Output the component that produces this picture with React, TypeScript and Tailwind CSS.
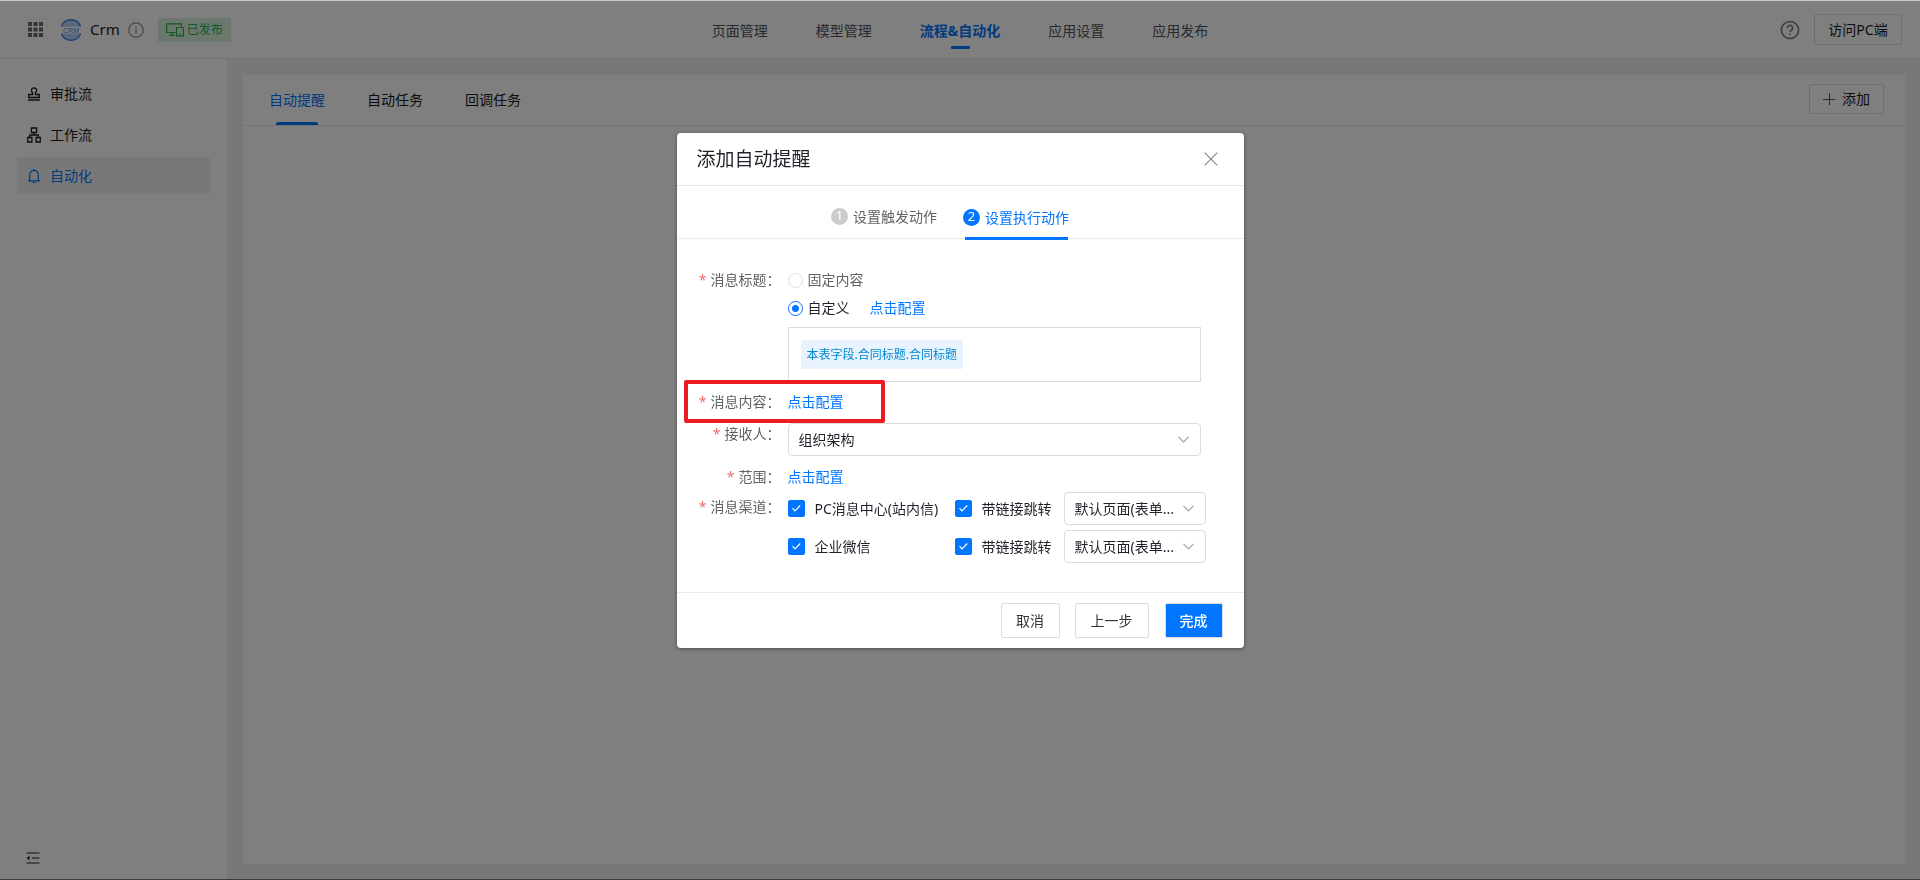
import React, { useState } from 'react';

const NAV_ITEMS = ['页面管理', '模型管理', '流程&自动化', '应用设置', '应用发布'];
const TABS = ['自动提醒', '自动任务', '回调任务'];

const StampIcon = () => (
    <svg width="14" height="14" viewBox="0 0 14 14" fill="none" stroke="currentColor" strokeWidth="1.3">
        <path d="M5.6 7.5V5.6a2.6 2.6 0 1 1 2.8 0v1.9h3.9v3H1.7v-3h3.9zM1.2 13h11.6" />
    </svg>
);

const FlowIcon = () => (
    <svg width="14" height="16" viewBox="0 0 14 16" fill="none" stroke="currentColor" strokeWidth="1.3">
        <path d="M4.4 1h5.2v4.5H4.4zM.7 10.5h4.2V15H.7zM9.1 10.5h4.2V15H9.1zM7 5.5V8M2.7 10.5V8h8.6v2.5" />
    </svg>
);

const BellIcon = () => (
    <svg width="14" height="16" viewBox="0 0 14 16" fill="none" stroke="currentColor" strokeWidth="1.2">
        <path d="M1 12.8h12M2.7 12.8V6.6a4.3 4.3 0 0 1 8.6 0v6.2M7 .8v1.5M5.5 14.5h3" />
    </svg>
);

const GridIcon = () => (
    <svg width="15" height="15" viewBox="0 0 15 15" fill="currentColor">
        {[0, 5.5, 11].map((y) =>
            [0, 5.5, 11].map((x) => <rect key={`${x}-${y}`} x={x} y={y} width="4" height="4" />)
        )}
    </svg>
);

const Logo = () => (
    <svg width="22" height="22" viewBox="0 0 22 22">
        <path d="M1.4 7.5a10.2 10.2 0 0 1 19.2 0z" fill="#b5cdf5" />
        <path d="M1.4 14.5a10.2 10.2 0 0 0 19.2 0z" fill="#b5cdf5" />
        <path d="M1.4 7.5a10.2 10.2 0 0 1 19.2 0M1.4 14.5a10.2 10.2 0 0 0 19.2 0" fill="none" stroke="#4080e4" strokeWidth="1.4" />
        <text x="11" y="13.6" textAnchor="middle" fontSize="7" fontFamily="Liberation Sans, sans-serif" fill="#4080e4">CRM</text>
    </svg>
);

const DevicesIcon = () => (
    <svg width="18" height="14" viewBox="0 0 18 14" fill="none" stroke="currentColor" strokeWidth="1.2">
        <path d="M9.5 9.5H.6V.8h14.8v3M3 12.4h6M6 9.5v3M10.5 4.5h6.8v8.4h-6.8zM13 11h2" />
    </svg>
);

const InfoIcon = () => (
    <svg width="16" height="16" viewBox="0 0 16 16" fill="none" stroke="currentColor" strokeWidth="1.2">
        <circle cx="8" cy="8" r="7.2" />
        <path d="M8 7v4.8M8 4.2v1.4" />
    </svg>
);

const HelpIcon = () => (
    <svg width="20" height="20" viewBox="0 0 20 20" fill="none" stroke="currentColor" strokeWidth="1.5">
        <circle cx="10" cy="10" r="8.6" />
        <path d="M7.4 8a2.6 2.6 0 1 1 3.7 2.3c-.8.4-1.1.8-1.1 1.7M10 13.6v1.6" />
    </svg>
);

const CollapseIcon = () => (
    <svg width="14" height="12" viewBox="0 0 14 12" fill="none" stroke="currentColor" strokeWidth="1.2">
        <path d="M.5 1h13M6 6h7.5M.5 11h13" />
        <path d="M.5 6 3.5 3.8v4.4z" fill="currentColor" stroke="none" />
    </svg>
);

const MENU = [
    { label: '审批流', icon: <StampIcon /> },
    { label: '工作流', icon: <FlowIcon /> },
    { label: '自动化', icon: <BellIcon /> },
];

interface FormRowProps {
    label: string;
    className?: string;
    labelClassName?: string;
    children: React.ReactNode;
}

const FormRow = ({ label, className = '', labelClassName = '', children }: FormRowProps) => (
    <div className={`flex ${className}`}>
        <div className={`w-[104px] shrink-0 text-right leading-[22px] text-[#606266] ${labelClassName}`}>
            <span className="mr-1 text-[#f56c6c]">*</span>
            {label}：
        </div>
        <div className="ml-[7px] min-w-0 flex-1">{children}</div>
    </div>
);

const ConfigLink = () => (
    <a href="#config" className="leading-[22px] text-[#0075ff]">点击配置</a>
);

const Radio = ({ label, checked, onChange }: { label: string; checked: boolean; onChange: () => void }) => (
    <label className={`flex items-center gap-[5px] leading-[22px] ${checked ? 'text-[#1f2329]' : 'text-[#606266]'}`}>
        <input
            type="radio"
            name="title-type"
            checked={checked}
            onChange={onChange}
            className="size-[15px] appearance-none rounded-full border border-[#dcdfe6] bg-white checked:border-[#0075ff] checked:bg-[radial-gradient(circle,#0075ff_3px,#fff_4px)]"
        />
        {label}
    </label>
);

const Checkbox = ({ label }: { label: string }) => (
    <label className="flex items-center gap-[10px] whitespace-nowrap leading-[22px] text-[#1f2329]">
        <span className="grid">
            <input
                type="checkbox"
                defaultChecked
                className="peer col-start-1 row-start-1 size-[17px] appearance-none rounded-[2px] border border-[#dcdfe6] checked:border-[#0075ff] checked:bg-[#0075ff]"
            />
            <svg className="pointer-events-none col-start-1 row-start-1 hidden peer-checked:block" width="17" height="17" viewBox="0 0 17 17" fill="none" stroke="#fff" strokeWidth="1.2">
                <path d="M4.5 8.2 7 10.8l5.2-5.3" />
            </svg>
        </span>
        {label}
    </label>
);

const Select = ({ label, options, className = '' }: { label: string; options: string[]; className?: string }) => (
    <div className={`grid items-center ${className}`}>
        <select
            aria-label={label}
            className="col-start-1 row-start-1 h-[33px] w-full appearance-none rounded-[4px] border border-[#dcdcdc] bg-white pr-5 pl-[10px] text-[#1f2329]"
        >
            {options.map((o) => (
                <option key={o}>{o}</option>
            ))}
        </select>
        <svg className="pointer-events-none col-start-1 row-start-1 mr-3 justify-self-end" width="11" height="7" viewBox="0 0 11 7" fill="none" stroke="#a0a4ac" strokeWidth="1.2">
            <path d="m.5.8 5 5 5-5" />
        </svg>
    </div>
);

const ReminderDialog = () => {
    const [titleType, setTitleType] = useState('custom');

    return (
        <div role="dialog" aria-label="添加自动提醒" className="w-[567px] rounded-[4px] bg-white shadow-[0_1px_4px_rgba(0,0,0,0.4)]">
            <div className="flex h-[53px] items-center justify-between border-b border-[#e4e4e4] pr-[26px] pl-5">
                <h2 className="text-[19px] text-[#1f2329]">添加自动提醒</h2>
                <button aria-label="关闭" className="text-[#85888f]">
                    <svg width="14" height="14" viewBox="0 0 14 14" stroke="currentColor" strokeWidth="1.2">
                        <path d="m.7.7 12.6 12.6M13.3.7.7 13.3" />
                    </svg>
                </button>
            </div>

            {/* Steps */}
            <div className="flex h-[53px] justify-center gap-[26px] border-b border-[#ebebeb] pr-5">
                <button className="flex items-center gap-[5px] pt-4 pb-2 text-[#606266]">
                    <span className="flex size-[17px] items-center justify-center rounded-full bg-[#ccc] text-[13px] text-white">1</span>
                    设置触发动作
                </button>
                <button className="-mb-[2px] flex flex-col items-center text-[#0075ff]">
                    <span className="flex flex-1 items-center gap-[5px] pt-[17px] pb-[6px]">
                        <span className="flex size-[17px] items-center justify-center rounded-full bg-[#0075ff] text-[13px] text-white">2</span>
                        设置执行动作
                    </span>
                    <span className="h-[3px] w-[103px] bg-[#0075ff]" />
                </button>
            </div>

            <form className="pt-[30px]" onSubmit={(e) => e.preventDefault()}>
                <FormRow label="消息标题" className="pr-[43px]">
                    <Radio label="固定内容" checked={titleType === 'fixed'} onChange={() => setTitleType('fixed')} />
                    <div className="mt-[6px] flex gap-5">
                        <Radio label="自定义" checked={titleType === 'custom'} onChange={() => setTitleType('custom')} />
                        <ConfigLink />
                    </div>
                    <div className="mt-2 flex h-[55px] items-center border border-[#dcdcdc] px-3">
                        <span className="rounded-[2px] bg-[#e8f3ff] px-[6px] text-[12px] leading-[29px] text-[#0089cf]">
                            本表字段.合同标题.合同标题
                        </span>
                    </div>
                </FormRow>

                {/* Highlighted row */}
                <div className="relative">
                    <FormRow label="消息内容" className="mt-[9px]">
                        <ConfigLink />
                    </FormRow>
                    <div className="pointer-events-none absolute -top-[11px] left-[7px] h-[43px] w-[201px] rounded-[2px] border-4 border-[#ed1c24]" />
                </div>

                <FormRow label="接收人" className="mt-[10px] pr-[43px]">
                    <Select label="接收人" options={['组织架构']} />
                </FormRow>
                <FormRow label="范围" className="mt-[10px]">
                    <ConfigLink />
                </FormRow>
                <FormRow label="消息渠道" className="mt-1 pr-[38px]" labelClassName="pt-1">
                    <div className="flex flex-col gap-[5px]">
                        {['PC消息中心(站内信)', '企业微信'].map((channel) => (
                            <div key={channel} className="flex items-center">
                                <div className="w-[167px]">
                                    <Checkbox label={channel} />
                                </div>
                                <Checkbox label="带链接跳转" />
                                <Select label="跳转页面" options={['默认页面(表单...']} className="ml-auto w-[142px]" />
                            </div>
                        ))}
                    </div>
                </FormRow>
            </form>

            <div className="mt-[29px] flex justify-end border-t border-[#ebebeb] pt-[10px] pr-[21px] pb-[10px] text-[#333]">
                <button className="h-[35px] w-[59px] rounded-[2px] border border-[#dcdcdc]">取消</button>
                <button className="ml-[15px] h-[35px] w-[74px] rounded-[2px] border border-[#dcdcdc]">上一步</button>
                <button className="ml-4 h-[35px] w-[58px] rounded-[2px] border border-[#dcdcdc] bg-[#0075ff] font-medium text-white">完成</button>
            </div>
        </div>
    );
};

export default function App() {
    return (
        <div className="flex h-screen flex-col border-t border-[#c8c8c8] bg-[#f0f0f0] font-['Noto_Sans','Noto_Sans_CJK_SC',sans-serif] text-[14px] text-[#1a1a1a]">
            <header className="grid h-[58px] shrink-0 grid-cols-[1fr_auto_1fr] border-b border-[#e2e2e2] bg-white">
                <div className="flex items-center pl-7">
                    <button aria-label="应用列表" className="text-[#6b6b6b]">
                        <GridIcon />
                    </button>
                    <div className="ml-[17px]">
                        <Logo />
                    </div>
                    <span className="ml-2 text-[15px]">Crm</span>
                    <button aria-label="应用信息" className="ml-2 text-[#85888f]">
                        <InfoIcon />
                    </button>
                    <span className="ml-[14px] flex h-6 items-center gap-[3px] rounded-[1px] bg-[#d8f0dd] px-2 text-[12px] text-[#22b04b]">
                        <DevicesIcon />
                        已发布
                    </span>
                </div>
                <nav className="flex gap-[48px]">
                    {NAV_ITEMS.map((item) => (
                        <a key={item} href="#nav" className={`flex flex-col items-center pt-[18px] ${item === '流程&自动化' ? 'font-bold text-[#0075ff]' : 'text-[#4e535c]'}`}>
                            <span className="leading-6">{item}</span>
                            {item === '流程&自动化' && <span className="mt-[3px] h-[3px] w-[19px] rounded-[1px] bg-[#0075ff]" />}
                        </a>
                    ))}
                </nav>
                <div className="flex items-center justify-end gap-[14px] pr-[18px]">
                    <button aria-label="帮助" className="text-[#6f757e]">
                        <HelpIcon />
                    </button>
                    <button className="h-[31px] w-[88px] rounded-[2px] border border-[#dedede]">访问PC端</button>
                </div>
            </header>

            <div className="flex min-h-0 flex-1">
                <aside className="flex w-[227px] shrink-0 flex-col bg-white px-[17px] py-4">
                    <div className="flex flex-col gap-1">
                        {MENU.map(({ label, icon }) => (
                            <a key={label} href="#menu" className={`flex h-[37px] items-center gap-[9px] rounded-[2px] pl-[10px] ${label === '自动化' ? 'bg-[#f0f0f0] text-[#0075ff]' : ''}`}>
                                {icon}
                                {label}
                            </a>
                        ))}
                    </div>
                    <button aria-label="收起菜单" className="mt-auto ml-[9px] self-start">
                        <CollapseIcon />
                    </button>
                </aside>

                <main className="flex-1 pt-4 pr-[15px] pb-4 pl-4">
                    <section className="h-full bg-white">
                        <div className="flex h-[51px] items-center justify-between border-b border-[#e4e4e4] pr-[21px] pl-[26px]">
                            <div className="flex h-full gap-[42px]">
                                {TABS.map((tab) => (
                                    <button key={tab} className={`flex flex-col items-center pt-[14px] ${tab === '自动提醒' ? 'text-[#0075ff]' : ''}`}>
                                        <span className="leading-[22px]">{tab}</span>
                                        {tab === '自动提醒' && <span className="mt-auto h-[3px] w-[42px] rounded-t-[2px] bg-[#0075ff]" />}
                                    </button>
                                ))}
                            </div>
                            <button className="-mt-[3px] flex h-[30px] w-[75px] items-center justify-center gap-[7px] rounded-[2px] border border-[#dedede]">
                                <svg width="12" height="12" viewBox="0 0 12 12" stroke="#555" strokeWidth="1">
                                    <path d="M0 6.5h12M6.5 0v12" />
                                </svg>
                                添加
                            </button>
                        </div>
                    </section>
                </main>
            </div>

            {/* Overlay */}
            <div className="fixed inset-x-0 top-px bottom-0 flex items-start justify-center border-b border-[#3c3c48] bg-black/50 pt-[132px]">
                <ReminderDialog />
            </div>
        </div>
    );
}
